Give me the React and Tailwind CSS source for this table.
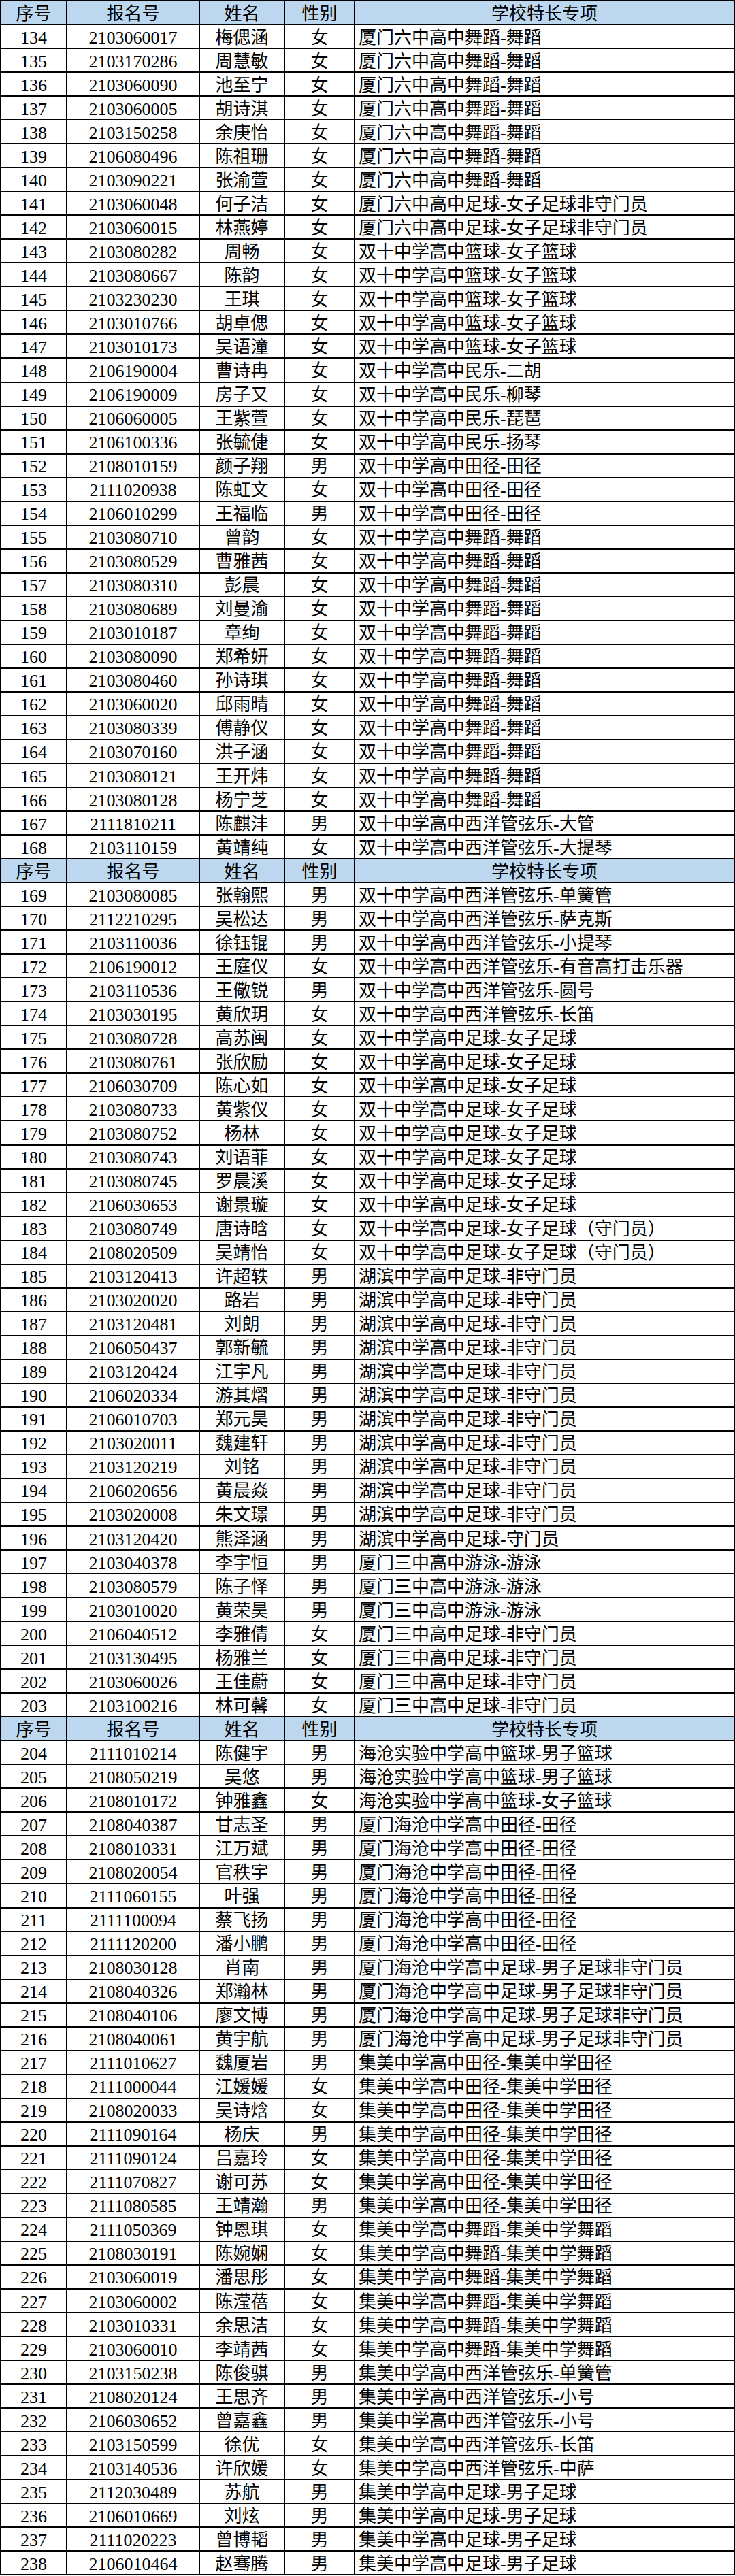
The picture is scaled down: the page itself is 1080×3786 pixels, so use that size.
import React from "react";

const part1 = [
	["134", "2103060017", "梅偲涵", "女", "厦门六中高中舞蹈-舞蹈"],
	["135", "2103170286", "周慧敏", "女", "厦门六中高中舞蹈-舞蹈"],
	["136", "2103060090", "池至宁", "女", "厦门六中高中舞蹈-舞蹈"],
	["137", "2103060005", "胡诗淇", "女", "厦门六中高中舞蹈-舞蹈"],
	["138", "2103150258", "余庚怡", "女", "厦门六中高中舞蹈-舞蹈"],
	["139", "2106080496", "陈祖珊", "女", "厦门六中高中舞蹈-舞蹈"],
	["140", "2103090221", "张渝萱", "女", "厦门六中高中舞蹈-舞蹈"],
	["141", "2103060048", "何子洁", "女", "厦门六中高中足球-女子足球非守门员"],
	["142", "2103060015", "林燕婷", "女", "厦门六中高中足球-女子足球非守门员"],
	["143", "2103080282", "周畅", "女", "双十中学高中篮球-女子篮球"],
	["144", "2103080667", "陈韵", "女", "双十中学高中篮球-女子篮球"],
	["145", "2103230230", "王琪", "女", "双十中学高中篮球-女子篮球"],
	["146", "2103010766", "胡卓偲", "女", "双十中学高中篮球-女子篮球"],
	["147", "2103010173", "吴语潼", "女", "双十中学高中篮球-女子篮球"],
	["148", "2106190004", "曹诗冉", "女", "双十中学高中民乐-二胡"],
	["149", "2106190009", "房子又", "女", "双十中学高中民乐-柳琴"],
	["150", "2106060005", "王紫萱", "女", "双十中学高中民乐-琵琶"],
	["151", "2106100336", "张毓倢", "女", "双十中学高中民乐-扬琴"],
	["152", "2108010159", "颜子翔", "男", "双十中学高中田径-田径"],
	["153", "2111020938", "陈虹文", "女", "双十中学高中田径-田径"],
	["154", "2106010299", "王福临", "男", "双十中学高中田径-田径"],
	["155", "2103080710", "曾韵", "女", "双十中学高中舞蹈-舞蹈"],
	["156", "2103080529", "曹雅茜", "女", "双十中学高中舞蹈-舞蹈"],
	["157", "2103080310", "彭晨", "女", "双十中学高中舞蹈-舞蹈"],
	["158", "2103080689", "刘曼渝", "女", "双十中学高中舞蹈-舞蹈"],
	["159", "2103010187", "章绚", "女", "双十中学高中舞蹈-舞蹈"],
	["160", "2103080090", "郑希妍", "女", "双十中学高中舞蹈-舞蹈"],
	["161", "2103080460", "孙诗琪", "女", "双十中学高中舞蹈-舞蹈"],
	["162", "2103060020", "邱雨晴", "女", "双十中学高中舞蹈-舞蹈"],
	["163", "2103080339", "傅静仪", "女", "双十中学高中舞蹈-舞蹈"],
	["164", "2103070160", "洪子涵", "女", "双十中学高中舞蹈-舞蹈"],
	["165", "2103080121", "王开炜", "女", "双十中学高中舞蹈-舞蹈"],
	["166", "2103080128", "杨宁芝", "女", "双十中学高中舞蹈-舞蹈"],
	["167", "2111810211", "陈麒沣", "男", "双十中学高中西洋管弦乐-大管"],
	["168", "2103110159", "黄靖纯", "女", "双十中学高中西洋管弦乐-大提琴"],
];

const part2 = [
	["169", "2103080085", "张翰熙", "男", "双十中学高中西洋管弦乐-单簧管"],
	["170", "2112210295", "吴松达", "男", "双十中学高中西洋管弦乐-萨克斯"],
	["171", "2103110036", "徐钰锟", "男", "双十中学高中西洋管弦乐-小提琴"],
	["172", "2106190012", "王庭仪", "女", "双十中学高中西洋管弦乐-有音高打击乐器"],
	["173", "2103110536", "王儆锐", "男", "双十中学高中西洋管弦乐-圆号"],
	["174", "2103030195", "黄欣玥", "女", "双十中学高中西洋管弦乐-长笛"],
	["175", "2103080728", "高苏闽", "女", "双十中学高中足球-女子足球"],
	["176", "2103080761", "张欣励", "女", "双十中学高中足球-女子足球"],
	["177", "2106030709", "陈心如", "女", "双十中学高中足球-女子足球"],
	["178", "2103080733", "黄紫仪", "女", "双十中学高中足球-女子足球"],
	["179", "2103080752", "杨林", "女", "双十中学高中足球-女子足球"],
	["180", "2103080743", "刘语菲", "女", "双十中学高中足球-女子足球"],
	["181", "2103080745", "罗晨溪", "女", "双十中学高中足球-女子足球"],
	["182", "2106030653", "谢景璇", "女", "双十中学高中足球-女子足球"],
	["183", "2103080749", "唐诗晗", "女", "双十中学高中足球-女子足球（守门员）"],
	["184", "2108020509", "吴靖怡", "女", "双十中学高中足球-女子足球（守门员）"],
	["185", "2103120413", "许超轶", "男", "湖滨中学高中足球-非守门员"],
	["186", "2103020020", "路岩", "男", "湖滨中学高中足球-非守门员"],
	["187", "2103120481", "刘朗", "男", "湖滨中学高中足球-非守门员"],
	["188", "2106050437", "郭新毓", "男", "湖滨中学高中足球-非守门员"],
	["189", "2103120424", "江宇凡", "男", "湖滨中学高中足球-非守门员"],
	["190", "2106020334", "游其熠", "男", "湖滨中学高中足球-非守门员"],
	["191", "2106010703", "郑元昊", "男", "湖滨中学高中足球-非守门员"],
	["192", "2103020011", "魏建轩", "男", "湖滨中学高中足球-非守门员"],
	["193", "2103120219", "刘铭", "男", "湖滨中学高中足球-非守门员"],
	["194", "2106020656", "黄晨焱", "男", "湖滨中学高中足球-非守门员"],
	["195", "2103020008", "朱文璟", "男", "湖滨中学高中足球-非守门员"],
	["196", "2103120420", "熊泽涵", "男", "湖滨中学高中足球-守门员"],
	["197", "2103040378", "李宇恒", "男", "厦门三中高中游泳-游泳"],
	["198", "2103080579", "陈子怿", "男", "厦门三中高中游泳-游泳"],
	["199", "2103010020", "黄荣昊", "男", "厦门三中高中游泳-游泳"],
	["200", "2106040512", "李雅倩", "女", "厦门三中高中足球-非守门员"],
	["201", "2103130495", "杨雅兰", "女", "厦门三中高中足球-非守门员"],
	["202", "2103060026", "王佳蔚", "女", "厦门三中高中足球-非守门员"],
	["203", "2103100216", "林可馨", "女", "厦门三中高中足球-非守门员"],
];

const part3 = [
	["204", "2111010214", "陈健宇", "男", "海沧实验中学高中篮球-男子篮球"],
	["205", "2108050219", "吴悠", "男", "海沧实验中学高中篮球-男子篮球"],
	["206", "2108010172", "钟雅鑫", "女", "海沧实验中学高中篮球-女子篮球"],
	["207", "2108040387", "甘志圣", "男", "厦门海沧中学高中田径-田径"],
	["208", "2108010331", "江万斌", "男", "厦门海沧中学高中田径-田径"],
	["209", "2108020054", "官秩宇", "男", "厦门海沧中学高中田径-田径"],
	["210", "2111060155", "叶强", "男", "厦门海沧中学高中田径-田径"],
	["211", "2111100094", "蔡飞扬", "男", "厦门海沧中学高中田径-田径"],
	["212", "2111120200", "潘小鹏", "男", "厦门海沧中学高中田径-田径"],
	["213", "2108030128", "肖南", "男", "厦门海沧中学高中足球-男子足球非守门员"],
	["214", "2108040326", "郑瀚林", "男", "厦门海沧中学高中足球-男子足球非守门员"],
	["215", "2108040106", "廖文博", "男", "厦门海沧中学高中足球-男子足球非守门员"],
	["216", "2108040061", "黄宇航", "男", "厦门海沧中学高中足球-男子足球非守门员"],
	["217", "2111010627", "魏厦岩", "男", "集美中学高中田径-集美中学田径"],
	["218", "2111000044", "江媛媛", "女", "集美中学高中田径-集美中学田径"],
	["219", "2108020033", "吴诗焓", "女", "集美中学高中田径-集美中学田径"],
	["220", "2111090164", "杨庆", "男", "集美中学高中田径-集美中学田径"],
	["221", "2111090124", "吕嘉玲", "女", "集美中学高中田径-集美中学田径"],
	["222", "2111070827", "谢可苏", "女", "集美中学高中田径-集美中学田径"],
	["223", "2111080585", "王靖瀚", "男", "集美中学高中田径-集美中学田径"],
	["224", "2111050369", "钟恩琪", "女", "集美中学高中舞蹈-集美中学舞蹈"],
	["225", "2108030191", "陈婉娴", "女", "集美中学高中舞蹈-集美中学舞蹈"],
	["226", "2103060019", "潘思彤", "女", "集美中学高中舞蹈-集美中学舞蹈"],
	["227", "2103060002", "陈滢蓓", "女", "集美中学高中舞蹈-集美中学舞蹈"],
	["228", "2103010331", "余思洁", "女", "集美中学高中舞蹈-集美中学舞蹈"],
	["229", "2103060010", "李靖茜", "女", "集美中学高中舞蹈-集美中学舞蹈"],
	["230", "2103150238", "陈俊骐", "男", "集美中学高中西洋管弦乐-单簧管"],
	["231", "2108020124", "王思齐", "男", "集美中学高中西洋管弦乐-小号"],
	["232", "2106030652", "曾嘉鑫", "男", "集美中学高中西洋管弦乐-小号"],
	["233", "2103150599", "徐优", "女", "集美中学高中西洋管弦乐-长笛"],
	["234", "2103140536", "许欣媛", "女", "集美中学高中西洋管弦乐-中萨"],
	["235", "2112030489", "苏航", "男", "集美中学高中足球-男子足球"],
	["236", "2106010669", "刘炫", "男", "集美中学高中足球-男子足球"],
	["237", "2111020223", "曾博韬", "男", "集美中学高中足球-男子足球"],
	["238", "2106010464", "赵骞腾", "男", "集美中学高中足球-男子足球"],
];

const rowCls =
	"grid grid-cols-[97px_195px_125px_103px_1fr] h-[35.04px] border-b-2 border-black";
const cell = "flex items-center justify-center pt-[4px] border-r-2 border-black";

const HeaderRow = () => (
	<div className={rowCls + " bg-[#bdd7ee]"}>
		<div className={cell}>序号</div>
		<div className={cell}>报名号</div>
		<div className={cell}>姓名</div>
		<div className={cell}>性别</div>
		<div className="flex items-center justify-center pt-[4px]">学校特长专项</div>
	</div>
);

const DataRow = ({ r }) => (
	<div className={rowCls + " bg-white"}>
		<div className={cell}>{r[0]}</div>
		<div className={cell}>{r[1]}</div>
		<div className={cell}>{r[2]}</div>
		<div className={cell}>{r[3]}</div>
		<div className="flex items-center pl-[5px] pt-[4px] whitespace-nowrap">{r[4]}</div>
	</div>
);

const App = () => {
	return (
		<div
			className="w-[1080px] bg-white border-t-2 border-l-2 border-r-2 border-black text-black text-[26px] leading-none"
			style={{ fontFamily: '"Liberation Serif", "Noto Sans CJK SC", serif' }}
		>
			<HeaderRow />
			{part1.map((r) => (
				<DataRow key={r[0]} r={r} />
			))}
			<HeaderRow />
			{part2.map((r) => (
				<DataRow key={r[0]} r={r} />
			))}
			<HeaderRow />
			{part3.map((r) => (
				<DataRow key={r[0]} r={r} />
			))}
		</div>
	);
};

export default App;
